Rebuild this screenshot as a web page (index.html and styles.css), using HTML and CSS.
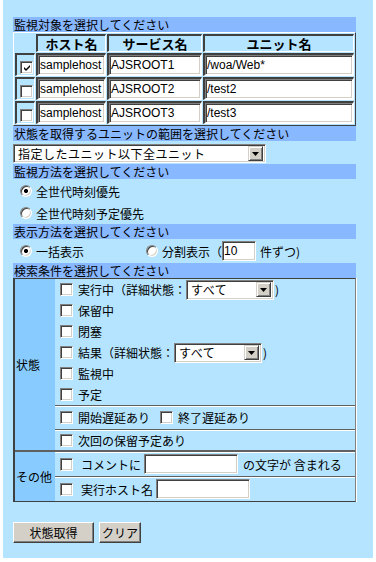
FILE: index.html
```html
<!DOCTYPE html>
<html lang="ja">
  <head>
    <meta charset="UTF-8" />
    <title>状態取得</title>
    <link rel="stylesheet" href="styles.css">
  </head>
  <body>
    <div class="page">
      <form class="form">
        <div class="bar">監視対象を選択してください</div>
        <table class="target">
          <tr>
            <th class="c-check"></th>
            <th class="c-host">ホスト名</th>
            <th class="c-service">サービス名</th>
            <th class="c-unit">ユニット名</th>
          </tr>
          <tr>
            <td><input type="checkbox" class="cb" checked></td>
            <td><input type="text" class="txt host" value="samplehost"></td>
            <td><input type="text" class="txt service" value="AJSROOT1"></td>
            <td><input type="text" class="txt unit" value="/woa/Web*"></td>
          </tr>
          <tr>
            <td><input type="checkbox" class="cb"></td>
            <td><input type="text" class="txt host" value="samplehost"></td>
            <td><input type="text" class="txt service" value="AJSROOT2"></td>
            <td><input type="text" class="txt unit" value="/test2"></td>
          </tr>
          <tr>
            <td><input type="checkbox" class="cb"></td>
            <td><input type="text" class="txt host" value="samplehost"></td>
            <td><input type="text" class="txt service" value="AJSROOT3"></td>
            <td><input type="text" class="txt unit" value="/test3"></td>
          </tr>
        </table>

        <div class="bar">状態を取得するユニットの範囲を選択してください</div>
        <div class="line range">
          <span class="select wide">
            <span class="value">指定したユニット以下全ユニット</span>
            <span class="arrow"><svg width="7" height="4" viewBox="0 0 7 4"><path d="M0 0h7L3.5 4z" fill="#000"/></svg></span>
          </span>
        </div>

        <div class="bar">監視方法を選択してください</div>
        <div class="modes">
          <label class="opt"><input type="radio" name="mode" class="rb" checked>全世代時刻優先</label>
          <label class="opt"><input type="radio" name="mode" class="rb">全世代時刻予定優先</label>
        </div>

        <div class="bar">表示方法を選択してください</div>
        <div class="opt view">
          <label class="all"><input type="radio" name="view" class="rb" checked>一括表示</label>
          <label><input type="radio" name="view" class="rb">分割表示（</label>
          <input type="text" class="txt num" value="10">
          <span>件ずつ)</span>
        </div>

        <div class="bar">検索条件を選択してください</div>
        <div class="search">
          <div class="group">
            <div class="label">状態</div>
            <div class="items">
              <div class="cell states">
                <div class="item">
                  <input type="checkbox" class="cb">実行中（詳細状態：
                  <span class="select small">
                    <span class="value">すべて</span>
                    <span class="arrow"><svg width="7" height="4" viewBox="0 0 7 4"><path d="M0 0h7L3.5 4z" fill="#000"/></svg></span>
                  </span>)
                </div>
                <div class="item"><input type="checkbox" class="cb">保留中</div>
                <div class="item"><input type="checkbox" class="cb">閉塞</div>
                <div class="item">
                  <input type="checkbox" class="cb">結果（詳細状態：
                  <span class="select small">
                    <span class="value">すべて</span>
                    <span class="arrow"><svg width="7" height="4" viewBox="0 0 7 4"><path d="M0 0h7L3.5 4z" fill="#000"/></svg></span>
                  </span>)
                </div>
                <div class="item"><input type="checkbox" class="cb">監視中</div>
                <div class="item"><input type="checkbox" class="cb">予定</div>
              </div>
              <div class="cell delay">
                <div class="item">
                  <input type="checkbox" class="cb">開始遅延あり
                  <input type="checkbox" class="cb gap">終了遅延あり
                </div>
              </div>
              <div class="cell next">
                <div class="item"><input type="checkbox" class="cb">次回の保留予定あり</div>
              </div>
            </div>
          </div>
          <div class="group">
            <div class="label">その他</div>
            <div class="items">
              <div class="cell other">
                <div class="item">
                  <input type="checkbox" class="cb"><span class="sp">コメントに</span>
                  <input type="text" class="txt comment">
                  <span class="sp">の文字が 含まれる</span>
                </div>
              </div>
              <div class="cell other">
                <div class="item">
                  <input type="checkbox" class="cb"><span class="sp">実行ホスト名</span>
                  <input type="text" class="txt exec">
                </div>
              </div>
            </div>
          </div>
        </div>

        <div class="buttons">
          <button type="button" class="btn get">状態取得</button>
          <button type="button" class="btn">クリア</button>
        </div>
      </form>
    </div>
  </body>
</html>
```

FILE: styles.css
```css
html {
  background: #fff;
}
body {
  margin: 0;
  font-family: "Noto Sans CJK JP", "Noto Sans", sans-serif;
  font-size: 12px;
  color: #000;
}
.page {
  width: 370px;
  height: 558px;
  margin-left: 3px;
  padding: 17px 0 0 10px;
  box-sizing: border-box;
  background: #b4e4ff;
}
.form {
  width: 343px;
  margin: 0;
}
.bar {
  background: #88b8ff;
  height: 15px;
  line-height: 15px;
  padding-left: 1px;
  white-space: nowrap;
}

/* classic form controls */
.txt {
  box-sizing: border-box;
  height: 20px;
  margin: 0;
  padding: 0 1px;
  border: 1px solid;
  border-color: #808080 #fff #fff #808080;
  box-shadow: inset 1px 1px 0 #404040, inset -1px -1px 0 #d4d0c8;
  background: #fff;
  font-family: "Liberation Sans", "Noto Sans CJK JP", sans-serif;
  font-size: 12px;
  color: #000;
  outline: none;
}
.cb,
.rb {
  appearance: none;
  -webkit-appearance: none;
  box-sizing: border-box;
  width: 13px;
  height: 13px;
  margin: 0 5px 0 0;
  border: 1px solid;
  border-color: #808080 #fff #fff #808080;
  box-shadow: inset 1px 1px 0 #404040, inset -1px -1px 0 #d4d0c8;
  background: #fff;
  vertical-align: middle;
  flex: none;
}
.cb:checked {
  background: #fff url("data:image/svg+xml,%3Csvg xmlns='http://www.w3.org/2000/svg' width='13' height='13'%3E%3Cpath d='M3 5l2 2 4-4v2l-4 4-2-2z' fill='%23000'/%3E%3C/svg%3E") no-repeat;
}
.rb {
  width: 12px;
  height: 12px;
  border-radius: 50%;
}
.rb:checked {
  background: radial-gradient(circle, #000 0 1.8px, #fff 2.3px);
}
.select {
  display: inline-flex;
  align-items: center;
  box-sizing: border-box;
  height: 19px;
  border: 1px solid;
  border-color: #808080 #fff #fff #808080;
  box-shadow: inset 1px 1px 0 #404040, inset -1px -1px 0 #d4d0c8;
  background: #fff;
  padding: 2px 2px 2px 4px;
  vertical-align: middle;
}
.select .value {
  flex: 1;
  line-height: 15px;
  white-space: nowrap;
  letter-spacing: 0.5px;
}
.select .arrow {
  display: flex;
  align-items: center;
  justify-content: center;
  box-sizing: border-box;
  width: 15px;
  height: 15px;
  background: #d4d0c8;
  border: 1px solid;
  border-color: #d4d0c8 #404040 #404040 #d4d0c8;
  box-shadow: inset 1px 1px 0 #fff, inset -1px -1px 0 #808080;
}
.select.wide {
  width: 253px;
}
.select.small {
  width: 88px;
  margin: 0 1px 0 0;
  height: 20px;
}

/* target table */
.target {
  width: 343px;
  table-layout: fixed;
  border-collapse: separate;
  border-spacing: 1px;
  border: 1px solid;
  border-color: #fff #404040 #404040 #fff;
}
.target th,
.target td {
  padding: 0;
  border: 1px solid;
  border-color: #404040 #fff #fff #404040;
  border-width: 2px 1px 1px 2px;
}
.target th {
  height: 15px;
  font-weight: bold;
  font-size: 13px;
  line-height: 15px;
  text-align: center;
}
.target td {
  height: 20px;
}
.target .c-check { width: 17px; }
.target .c-host { width: 67px; }
.target .c-service { width: 92px; }
.target td .cb {
  margin: 0 0 0 3px;
  vertical-align: middle;
}
.target .txt {
  display: block;
  width: 100%;
}
.target th.c-check {
  border-color: transparent;
}

.line.range {
  padding: 2px 0 2px;
  height: 19px;
}

.modes {
  padding-top: 1px;
}
.opt {
  display: flex;
  align-items: center;
  height: 22px;
  padding-left: 7px;
  white-space: nowrap;
}
.opt .rb {
  margin-right: 4px;
}
.view {
  height: 24px;
}
.view label {
  display: flex;
  align-items: center;
}
.view .all {
  width: 126px;
}
.view .num {
  width: 34px;
  margin: 0 4px 0 0;
}

/* search conditions */
.search {
  border: 1px solid;
  border-color: #404040 #808080 #404040 #404040;
  border-width: 1px 1px 1px 2px;
  box-shadow: 1px 0 0 #fff;
}
.group {
  display: flex;
}
.group + .group {
  border-top: 2px solid #606060;
  box-shadow: inset 0 1px 0 #fff;
}
.label {
  width: 40px;
  background: #88ccff;
  display: flex;
  align-items: center;
  padding-left: 1px;
  box-sizing: border-box;
  white-space: nowrap;
}
.items {
  flex: 1;
}
.cell {
  padding-left: 5px;
}
.cell + .cell {
  border-top: 1px solid #606060;
  box-shadow: inset 0 1px 0 #fff;
}
.item {
  display: flex;
  align-items: center;
  height: 21px;
  white-space: nowrap;
}
.delay .item {
  height: 23px;
}
.next .item {
  height: 20px;
}
.other .item {
  height: 24px;
}
.cb.gap {
  margin-left: 10px;
}
.sp {
  margin-left: 3px;
  margin-right: 3px;
}
.comment {
  width: 94px;
  margin-right: 2px;
}
.exec {
  width: 94px;
}

.buttons {
  display: flex;
  gap: 5px;
  margin-top: 20px;
}
.btn {
  box-sizing: border-box;
  height: 21px;
  padding: 0;
  border: 1px solid;
  border-color: #fff #404040 #404040 #fff;
  box-shadow: inset -1px -1px 0 #808080;
  background: #d4d0c8;
  font-family: "Noto Sans CJK JP", "Noto Sans", sans-serif;
  font-size: 12px;
  color: #000;
}
.btn.get {
  width: 81px;
}
.btn:last-child {
  width: 42px;
}
```
